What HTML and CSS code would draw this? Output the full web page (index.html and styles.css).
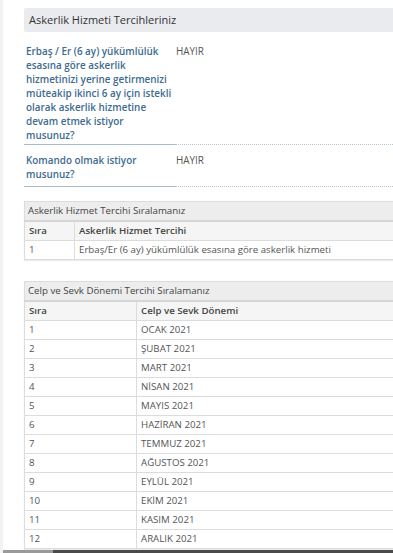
FILE: index.html
```html
<!DOCTYPE html>
<html lang="tr">
<head>
<meta charset="utf-8">
<link rel="stylesheet" href="styles.css">
</head>
<body>
<div class="page">
  <div class="panel-title">Askerlik Hizmeti Tercihleriniz</div>
  <div class="qa qa-first">
    <div class="q">Erbaş / Er (6 ay) yükümlülük esasına göre askerlik hizmetinizi yerine getirmenizi müteakip ikinci 6 ay için istekli olarak askerlik hizmetine devam etmek istiyor musunuz?</div>
    <div class="a">HAYIR</div>
  </div>
  <div class="qa qa-second">
    <div class="q">Komando olmak istiyor musunuz?</div>
    <div class="a">HAYIR</div>
  </div>

  <table class="grid grid-1">
    <tr><th colspan="2" class="cap">Askerlik Hizmet Tercihi Sıralamanız</th></tr>
    <tr class="head"><td class="c1">Sıra</td><td>Askerlik Hizmet Tercihi</td></tr>
    <tr><td class="c1">1</td><td>Erbaş/Er (6 ay) yükümlülük esasına göre askerlik hizmeti</td></tr>
  </table>

  <table class="grid grid-2">
    <tr><th colspan="2" class="cap">Celp ve Sevk Dönemi Tercihi Sıralamanız</th></tr>
    <tr class="head"><td class="c1">Sıra</td><td>Celp ve Sevk Dönemi</td></tr>
    <tr><td class="c1">1</td><td>OCAK 2021</td></tr>
    <tr><td class="c1">2</td><td>ŞUBAT 2021</td></tr>
    <tr><td class="c1">3</td><td>MART 2021</td></tr>
    <tr><td class="c1">4</td><td>NİSAN 2021</td></tr>
    <tr><td class="c1">5</td><td>MAYIS 2021</td></tr>
    <tr><td class="c1">6</td><td>HAZİRAN 2021</td></tr>
    <tr><td class="c1">7</td><td>TEMMUZ 2021</td></tr>
    <tr><td class="c1">8</td><td>AĞUSTOS 2021</td></tr>
    <tr><td class="c1">9</td><td>EYLÜL 2021</td></tr>
    <tr><td class="c1">10</td><td>EKİM 2021</td></tr>
    <tr><td class="c1">11</td><td>KASIM 2021</td></tr>
    <tr><td class="c1">12</td><td>ARALIK 2021</td></tr>
  </table>
</div>
<div class="scrollbar"><div class="thumb"></div></div>
</body>
</html>
```

FILE: styles.css
```css
html, body {
  margin: 0;
  padding: 0;
  background: #ffffff;
}
body {
  font-family: "Open Sans", "Liberation Sans", sans-serif;
  font-size: 11px;
  color: #555;
  border-left: 3px solid #f2f2f2;
  width: 390px;
  overflow: hidden;
}
.page {
  padding: 8px 0 0 21px;
}
.panel-title {
  background: #e9ebee;
  color: #333;
  height: 24px;
  line-height: 24px;
  padding-left: 5px;
  border-radius: 2px 0 0 2px;
}
.qa {
  display: flex;
}
.q {
  width: 146px;
  padding: 8px 3px 5px 2px;
  color: #3d6b8f;
  font-size: 9.9px;
  font-weight: 600;
  line-height: 14px;
  border-bottom: 1px solid #a9bccb;
}
.a {
  flex: 1;
  padding: 8px 0 0 1px;
  font-size: 9.9px;
  line-height: 14px;
  color: #555;
  border-bottom: 1px dotted #b7c6d2;
}
.qa-first .q {
  padding-top: 12px;
  padding-bottom: 2px;
}
.qa-first .a {
  padding-top: 12px;
}
.grid {
  width: 100%;
  border-collapse: collapse;
  border-left: 1px solid #dcdcdc;
  border-right: 0;
  box-shadow: 0 1px 1px rgba(0,0,0,0.08);
  font-size: 9.7px;
}
.grid td, .grid th {
  border-top: 1px solid #dcdcdc;
  border-bottom: 1px solid #dcdcdc;
  height: 18px;
  padding: 0 0 0 4px;
  text-align: left;
  font-weight: normal;
  line-height: 18px;
}
.grid td.c1 {
  border-right: 1px solid #dcdcdc;
}
.grid .cap {
  background: #ededed;
  color: #444;
  height: 18px;
  padding-left: 3px;
  border-bottom: 2px solid #d6d6d6;
}
.grid .head td {
  background: #f5f5f5;
  color: #444;
  font-weight: 600;
}
.grid-1 {
  margin-top: 14px;
}
.grid-1 .c1 {
  width: 45px;
}
.grid-2 {
  margin-top: 21px;
}
.grid-2 .c1 {
  width: 107px;
}
.scrollbar {
  margin-top: 1px;
  height: 4px;
  background: #4a4a4a;
}
.thumb {
  width: 50px;
  height: 4px;
  background: #9a9a9a;
}
```
